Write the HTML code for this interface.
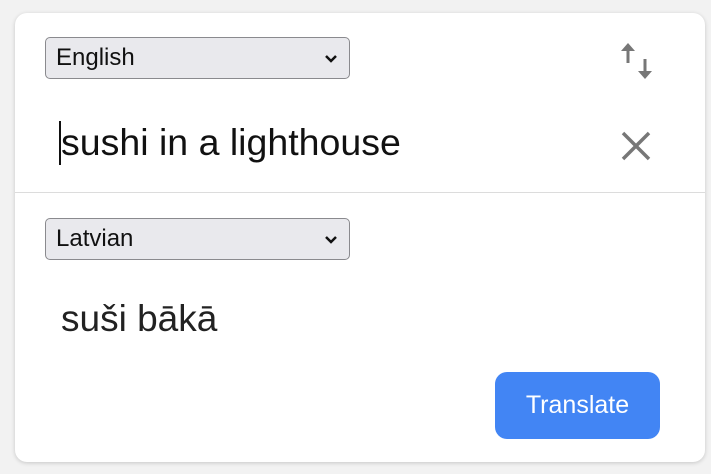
<!DOCTYPE html>
<html><head><style>
body{margin:0;width:711px;height:474px;background:#f2f2f2;font-family:"Liberation Sans",Roboto,sans-serif;position:relative;overflow:hidden}
.card{position:absolute;left:15px;top:13px;width:690px;height:449px;background:#fff;border-radius:12px;box-shadow:0 1px 4px rgba(0,0,0,.18)}
.sel{position:absolute;left:30px;width:305px;height:42px;border:1px solid #8a8a8e;border-radius:5px;background:#e9e9ed;box-sizing:border-box;font-size:24px;color:#111;padding-left:10px;line-height:40px}
.sel svg{position:absolute;right:11px;top:16px}
.div{position:absolute;left:0;right:0;top:179px;height:1px;background:#dcdcdc}
.t{position:absolute;color:#111;white-space:nowrap}
.btn{position:absolute;left:480px;top:359px;width:165px;height:67px;background:#4285f4;border-radius:12px;color:#fff;font-size:25px;text-align:center;line-height:67px}
</style></head><body>
<div class="card">
<div class="sel" style="top:24px">English<svg width="14" height="10" viewBox="0 0 14 10"><path d="M2 2l5 5 5-5" stroke="#111" stroke-width="2.5" fill="none"/></svg></div>
<svg style="position:absolute;left:604px;top:29px" width="34" height="38" viewBox="0 0 34 38"><path d="M9 1l-7 8h5.5v12h3V9h5.5z M26 37l7-8h-5.5V17h-3v12h-5.5z" fill="#777"/></svg>
<div style="position:absolute;left:44px;top:108px;width:1.5px;height:44px;background:#111"></div>
<div class="t" style="left:46px;top:108px;font-size:37.5px">sushi in a lighthouse</div>
<svg style="position:absolute;left:605px;top:118px" width="32" height="30" viewBox="0 0 32 30"><path d="M3 2l26 26M29 2L3 28" stroke="#777" stroke-width="3.5"/></svg>
<div class="div"></div>
<div class="sel" style="top:205px">Latvian<svg width="14" height="10" viewBox="0 0 14 10"><path d="M2 2l5 5 5-5" stroke="#111" stroke-width="2.5" fill="none"/></svg></div>
<div class="t" style="left:46px;top:285px;font-size:37px;color:#222">suši bākā</div>
<div class="btn">Translate</div>
</div>
</body></html>
